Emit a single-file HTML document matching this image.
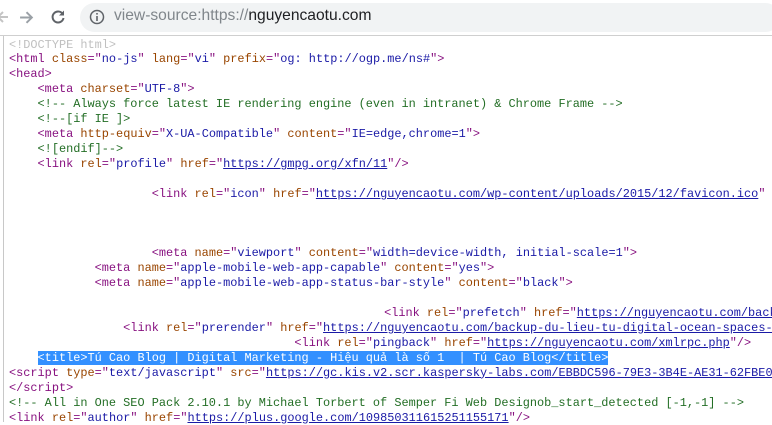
<!DOCTYPE html>
<html><head><meta charset="utf-8"><style>
body{margin:0;width:772px;height:422px;overflow:hidden;background:#fff;position:relative;font-family:"Liberation Sans",sans-serif}
.bar{position:absolute;left:0;top:0;width:772px;height:35px;background:#fff;border-bottom:1px solid #cfcfcf}
.omni{position:absolute;left:80px;top:3px;width:700px;height:29px;background:#f1f3f4;border-radius:15px}
.url{position:absolute;left:114px;top:7px;font-size:15.6px;color:#202124}
.url span{color:#80868b}
.gut{position:absolute;left:3px;top:36px;width:1px;height:386px;background:#c8c8c8}
pre{position:absolute;left:9px;top:37.5px;margin:0;font-family:"Liberation Mono",monospace;font-size:11.9px;line-height:14.92px;color:#000;white-space:pre}
.t{color:#881280}.a{color:#994500}.v{color:#1a1aa6}.c{color:#236e25}.d{color:#c0c0c0}
u{color:#1a1aa6}
.sel{background:#3390ff;color:#fff}
.sel *{color:#fff}
</style></head><body>
<div class="bar">
<svg style="position:absolute;left:-4px;top:10px" width="14" height="14" viewBox="0 0 14 14"><path d="M12 7H2M7 2L2 7l5 5" stroke="#c4c4c4" stroke-width="2" fill="none"/></svg>
<svg style="position:absolute;left:19px;top:10px" width="15" height="15" viewBox="0 0 14 14"><path d="M1 7h11M7 2l5 5-5 5" stroke="#9aa0a6" stroke-width="1.8" fill="none"/></svg>
<svg style="position:absolute;left:50px;top:9px" width="16" height="16" viewBox="0 0 16 16"><path d="M13 5.5A5.5 5.5 0 1 0 13.5 9" stroke="#5f6368" stroke-width="2" fill="none"/><path d="M14 1.5v5h-5z" fill="#5f6368"/></svg>
<div class="omni"></div>
<svg style="position:absolute;left:89px;top:9px" width="16" height="16" viewBox="0 0 16 16"><circle cx="8" cy="8" r="6.5" stroke="#5f6368" stroke-width="1.5" fill="none"/><rect x="7.2" y="7" width="1.6" height="5" fill="#5f6368"/><rect x="7.2" y="4" width="1.6" height="1.6" fill="#5f6368"/></svg>
<div class="url"><span>view-source:https://</span>nguyencaotu.com</div>
</div>
<div class="gut"></div>
<pre><span class="d">&lt;!DOCTYPE html&gt;</span>
<span class="t">&lt;html <span class="a">class</span>="<span class="v">no-js</span>" <span class="a">lang</span>="<span class="v">vi</span>" <span class="a">prefix</span>="<span class="v">og: http://ogp.me/ns#</span>"&gt;</span>
<span class="t">&lt;head&gt;</span>
    <span class="t">&lt;meta <span class="a">charset</span>="<span class="v">UTF-8</span>"&gt;</span>
    <span class="c">&lt;!-- Always force latest IE rendering engine (even in intranet) &amp; Chrome Frame --&gt;</span>
    <span class="c">&lt;!--[if IE ]&gt;</span>
    <span class="t">&lt;meta <span class="a">http-equiv</span>="<span class="v">X-UA-Compatible</span>" <span class="a">content</span>="<span class="v">IE=edge,chrome=1</span>"&gt;</span>
    <span class="c">&lt;![endif]--&gt;</span>
    <span class="t">&lt;link <span class="a">rel</span>="<span class="v">profile</span>" <span class="a">href</span>="<u>https://gmpg.org/xfn/11</u>"/&gt;</span>

                    <span class="t">&lt;link <span class="a">rel</span>="<span class="v">icon</span>" <span class="a">href</span>="<u>https://nguyencaotu.com/wp-content/uploads/2015/12/favicon.ico</u>" </span>



                    <span class="t">&lt;meta <span class="a">name</span>="<span class="v">viewport</span>" <span class="a">content</span>="<span class="v">width=device-width, initial-scale=1</span>"&gt;</span>
            <span class="t">&lt;meta <span class="a">name</span>="<span class="v">apple-mobile-web-app-capable</span>" <span class="a">content</span>="<span class="v">yes</span>"&gt;</span>
            <span class="t">&lt;meta <span class="a">name</span>="<span class="v">apple-mobile-web-app-status-bar-style</span>" <span class="a">content</span>="<span class="v">black</span>"&gt;</span>

                                                    <span class="t" style="margin-left:4px">&lt;link <span class="a">rel</span>="<span class="v">prefetch</span>" <span class="a">href</span>="<u>https://nguyencaotu.com/backup</u></span>
                <span class="t">&lt;link <span class="a">rel</span>="<span class="v">prerender</span>" <span class="a">href</span>="<u>https://nguyencaotu.com/backup-du-lieu-tu-digital-ocean-spaces-</u></span>
                                        <span class="t">&lt;link <span class="a">rel</span>="<span class="v">pingback</span>" <span class="a">href</span>="<u>https://nguyencaotu.com/xmlrpc.php</u>"/&gt;</span>
    <span class="sel">&lt;title&gt;Tú Cao Blog | Digital Marketing - Hiệu quả là số 1  | Tú Cao Blog&lt;/title&gt;</span>
<span class="t">&lt;script <span class="a">type</span>="<span class="v">text/javascript</span>" <span class="a">src</span>="<u>https://gc.kis.v2.scr.kaspersky-labs.com/EBBDC596-79E3-3B4E-AE31-62FBE0</u></span>
<span class="t">&lt;/script&gt;</span>
<span class="c">&lt;!-- All in One SEO Pack 2.10.1 by Michael Torbert of Semper Fi Web Designob_start_detected [-1,-1] --&gt;</span>
<span class="t">&lt;link <span class="a">rel</span>="<span class="v">author</span>" <span class="a">href</span>="<u>https://plus.google.com/109850311615251155171</u>"/&gt;</span>
</pre>
</body></html>
